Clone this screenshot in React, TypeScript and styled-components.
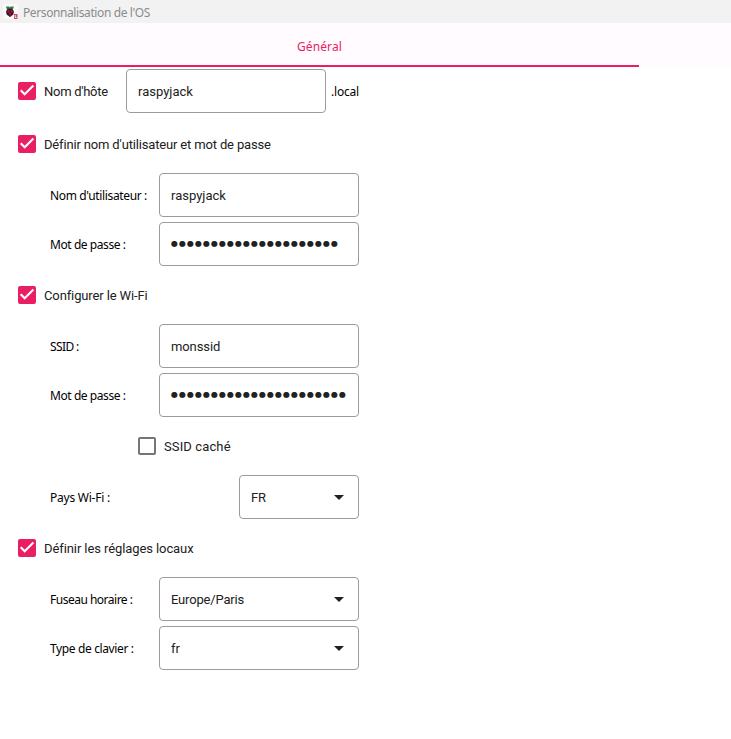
import React from "react";
import styled, { createGlobalStyle } from "styled-components";

const GlobalStyle = createGlobalStyle`
  *, *::before, *::after { box-sizing: border-box; }
  body { margin: 0; background: #ffffff; }
`;

const Window = styled.main`
  width: 731px;
  height: 739px;
  overflow: hidden;
  background: #ffffff;
  color: #000000;
  font-family: "Noto Sans", "Open Sans", sans-serif;
  font-size: 12px;
`;

const TitleBar = styled.header`
  display: flex;
  align-items: center;
  height: 23px;
  padding: 1px 0 0 3px;
  gap: 5px;
  background: #f2f2f2;
  svg { display: block; }
`;

const Title = styled.span`
  color: #8b8b8b;
  line-height: 18px;
  padding-top: 1px;
  white-space: nowrap;
  letter-spacing: -0.4px;
`;

const TabBar = styled.nav`
  height: 44px;
  background: #fffbfe;
`;

const Tab = styled.div`
  display: flex;
  align-items: center;
  justify-content: center;
  width: 639px;
  height: 44px;
  padding-top: 5px;
  border-bottom: 2px solid #e91e63;
  color: #e91e63;
  letter-spacing: 0.1px;
`;

const Form = styled.section`
  display: flex;
  flex-direction: column;
  width: 359px;
  padding-top: 2px;
`;

const HostRow = styled.div`
  display: flex;
  align-items: center;
  height: 44px;
  padding-left: 18px;
`;

const CheckRow = styled.div<{ $indent?: number; $first?: boolean }>`
  display: flex;
  align-items: center;
  height: ${(p) => (p.$first ? 60 : 58)}px;
  padding-top: ${(p) => (p.$first ? 2 : 0)}px;
  padding-left: ${(p) => p.$indent ?? 18}px;
`;

const CheckBox = styled.span<{ $checked: boolean }>`
  display: block;
  flex: none;
  width: 18px;
  height: 18px;
  margin-right: 8px;
  border-radius: 2px;
  border: 2px solid ${(p) => (p.$checked ? "#e91e63" : "#757575")};
  background: ${(p) => (p.$checked ? "#e91e63" : "#ffffff")};
  svg { display: block; margin: -2px; }
`;

const CheckLabel = styled.span<{ $spacing: number }>`
  padding-top: 1px;
  color: #212121;
  font: 13px/18px Roboto, sans-serif;
  letter-spacing: ${(p) => p.$spacing}px;
  white-space: nowrap;
`;

const Fields = styled.div`
  display: flex;
  flex-direction: column;
  gap: 5px;
  padding-left: 50px;
`;

const FieldRow = styled.label`
  display: flex;
  align-items: center;
  justify-content: space-between;
  height: 44px;
`;

const FieldLabel = styled.span<{ $spacing: number }>`
  flex: none;
  padding-top: 2px;
  line-height: 18px;
  white-space: nowrap;
  letter-spacing: ${(p) => p.$spacing}px;
`;

const Box = styled.div<{ $width: number }>`
  display: flex;
  flex: none;
  align-items: center;
  justify-content: space-between;
  width: ${(p) => p.$width}px;
  height: 44px;
  padding: 0 14px 0 11px;
  border: 1px solid #9b9b9b;
  border-radius: 4px;
  background: #ffffff;
`;

const HostBox = styled(Box)`
  margin-left: auto;
`;

const HostSuffix = styled(FieldLabel)`
  width: 33px;
  padding-left: 5px;
`;

const Value = styled.span<{ $spacing: number }>`
  padding-top: 1px;
  color: #212121;
  font: 13px/18px Roboto, sans-serif;
  letter-spacing: ${(p) => p.$spacing}px;
`;

const Dots = styled.span`
  color: #212121;
  font: 8px/18px "DejaVu Sans", sans-serif;
  letter-spacing: 1.02px;
  white-space: nowrap;
`;

function RaspberryIcon() {
  return (
    <svg width="15" height="16" viewBox="0 0 15 16">
      <rect width="15" height="15" rx="2" fill="#fafafa" />
      <path d="M3 2.6h3l.9.8.9-.8h3l-.6 2.2L7 5.8 3.6 4.8Z" fill="#317b38" />
      <path d="M4.4 4.8h5l1.6 2.8-.6 2.8L7 13l-3.4-2.6L3 7.6Z" fill="#45142a" />
      <circle cx="5.3" cy="7.2" r="1.1" fill="#9d2344" />
      <circle cx="8.6" cy="7.2" r="1.1" fill="#9d2344" />
      <circle cx="7" cy="9.5" r="1.1" fill="#9d2344" />
      <circle cx="7" cy="12" r=".7" fill="#84203b" />
      <path d="M11 10h3.5v5H11z" fill="#cf4867" />
      <path d="M12.2 11v2.5h1.3" fill="none" stroke="#f8dce3" />
    </svg>
  );
}

function Arrow() {
  return (
    <svg width="10" height="5" viewBox="0 0 10 5">
      <path d="M0 0h10L5 5Z" fill="#212121" />
    </svg>
  );
}

function Check({ checked = true }: { checked?: boolean }) {
  return (
    <CheckBox $checked={checked} role="checkbox" aria-checked={checked}>
      {checked && (
        <svg width="18" height="18" viewBox="0 0 18 18">
          <path d="m2.7 8.2 4 4 8.7-8.8" fill="none" stroke="#fff" strokeWidth="2.1" />
        </svg>
      )}
    </CheckBox>
  );
}

interface FieldProps {
  label: string;
  spacing: number;
  value?: string;
  valueSpacing?: number;
  dots?: number;
  select?: boolean;
  width?: number;
}

function Field({ label, spacing, value, valueSpacing = 0, dots, select, width = 200 }: FieldProps) {
  return (
    <FieldRow>
      <FieldLabel $spacing={spacing}>{label}</FieldLabel>
      <Box $width={width}>
        {dots ? <Dots>{"●".repeat(dots)}</Dots> : <Value $spacing={valueSpacing}>{value}</Value>}
        {select && <Arrow />}
      </Box>
    </FieldRow>
  );
}

export default function App() {
  return (
    <>
      <GlobalStyle />
      <Window>
        <TitleBar>
          <RaspberryIcon />
          <Title>Personnalisation de l'OS</Title>
        </TitleBar>
        <TabBar>
          <Tab>Général</Tab>
        </TabBar>
        <Form>
          <HostRow>
            <Check />
            <CheckLabel $spacing={-0.28}>Nom d'hôte</CheckLabel>
            <HostBox $width={200}>
              <Value $spacing={0}>raspyjack</Value>
            </HostBox>
            <HostSuffix $spacing={-0.2}>.local</HostSuffix>
          </HostRow>
          <CheckRow $first>
            <Check />
            <CheckLabel $spacing={-0.16}>Définir nom d'utilisateur et mot de passe</CheckLabel>
          </CheckRow>
          <Fields>
            <Field label="Nom d'utilisateur :" spacing={-0.36} value="raspyjack" />
            <Field label="Mot de passe :" spacing={-0.43} dots={21} />
          </Fields>
          <CheckRow>
            <Check />
            <CheckLabel $spacing={-0.12}>Configurer le Wi-Fi</CheckLabel>
          </CheckRow>
          <Fields>
            <Field label="SSID :" spacing={-0.6} value="monssid" valueSpacing={-0.1} />
            <Field label="Mot de passe :" spacing={-0.43} dots={22} />
          </Fields>
          <CheckRow $indent={138}>
            <Check checked={false} />
            <CheckLabel $spacing={0.12}>SSID caché</CheckLabel>
          </CheckRow>
          <Fields>
            <Field label="Pays Wi-Fi :" spacing={-0.24} value="FR" valueSpacing={-0.2} select width={120} />
          </Fields>
          <CheckRow>
            <Check />
            <CheckLabel $spacing={-0.09}>Définir les réglages locaux</CheckLabel>
          </CheckRow>
          <Fields>
            <Field label="Fuseau horaire :" spacing={-0.5} value="Europe/Paris" valueSpacing={-0.18} select />
            <Field label="Type de clavier :" spacing={-0.37} value="fr" select />
          </Fields>
        </Form>
      </Window>
    </>
  );
}
